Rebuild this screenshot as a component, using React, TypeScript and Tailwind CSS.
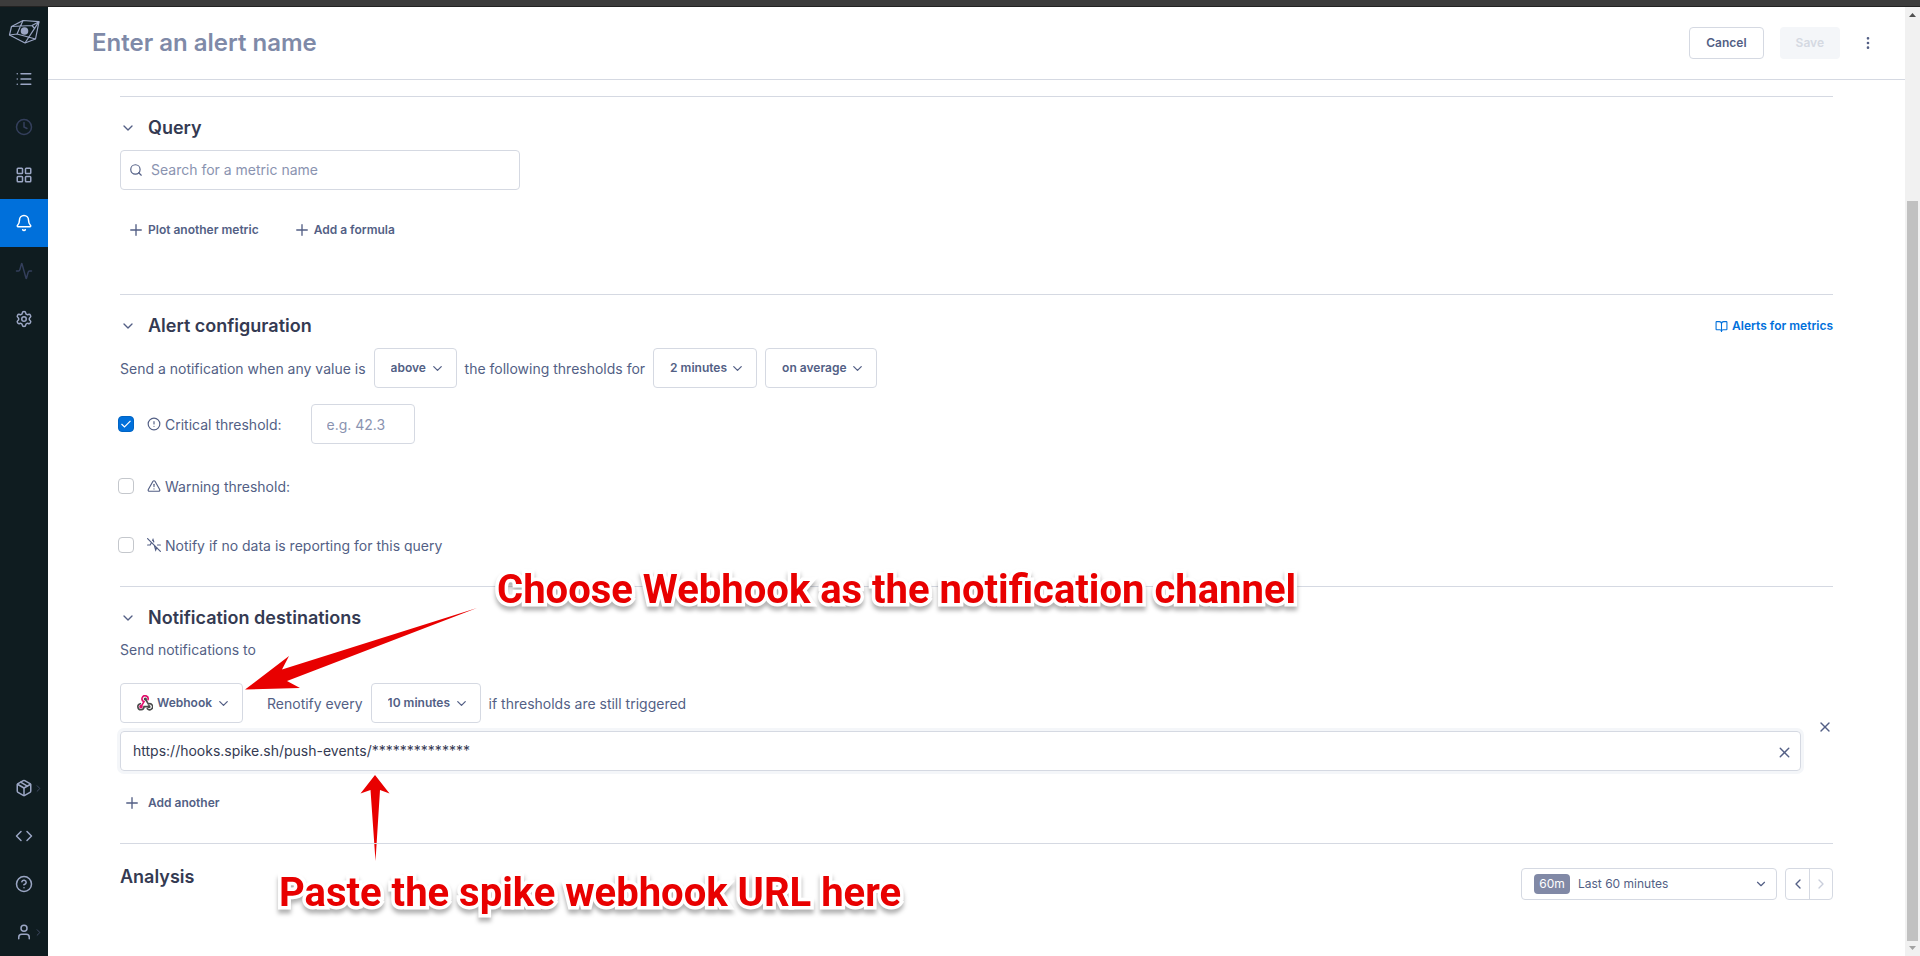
import type { ReactNode } from "react";
import {
  Activity,
  AlertTriangle,
  Bell,
  BookOpen,
  ChevronDown,
  ChevronLeft,
  ChevronRight,
  CircleAlert,
  CircleHelp,
  Clock,
  Code,
  LayoutGrid,
  List,
  MoreVertical,
  Package,
  Plus,
  Search,
  Settings,
  User,
  X,
} from "lucide-react";

function Logo() {
  return (
    <svg viewBox="0 0 32 26" className="h-[26px] w-8" fill="none" stroke="currentColor" strokeWidth="1.2" strokeLinejoin="round">
      <path d="M1.500 17 3.500 8.500 15 2.500 31 3.700 27.500 21 17 25 1.500 17Z" />
      <path d="M3.500 8.500 24 7.500 31 3.700M24 7.500 27 11M31 3.700 17 25M15 2.500 9 16 27.500 21M1.500 17 9 16" />
      <circle cx="16.500" cy="13" r="3.800" fill="currentColor" stroke="none" />
    </svg>
  );
}

function WebhookIcon() {
  return (
    <svg viewBox="0 0 24 24" className="size-4" fill="none" strokeWidth="2.4" strokeLinecap="round">
      <path stroke="#e0106c" d="M6 17.500 10.500 10A4.600 4.600 0 1 1 16.500 7" />
      <path stroke="#4a4a4a" d="M12.500 6 17 13.500A4.500 4.500 0 1 1 15.500 20.500" />
      <path stroke="#4a4a4a" d="M18 17.500H10.500A4.600 4.600 0 1 1 5 13" />
      <circle cx="6" cy="17.500" r="1.500" fill="#e0106c" stroke="#e0106c" />
      <circle cx="12.500" cy="6" r="1.200" fill="#4a4a4a" stroke="#4a4a4a" />
      <circle cx="18" cy="17.500" r="1.200" fill="#4a4a4a" stroke="#4a4a4a" />
    </svg>
  );
}

function NoDataIcon() {
  return (
    <svg viewBox="0 0 14 14" className="size-3.5" fill="none" stroke="currentColor" strokeWidth="1.200" strokeLinecap="round">
      <path d="M.6.6 13.400 13.400M.6 7H3.200L4.200 5M5.600 2.500 6 1.600 6.800 4M7.400 7.500 8.700 12 9.800 9.500M10.500 7H13.400" />
    </svg>
  );
}

type NavItem = { label: string; icon: ReactNode; tone?: "dim" | "active"; more?: boolean };

const topNav: NavItem[] = [
  { label: "Explorer", icon: <List size={18} /> },
  { label: "History", icon: <Clock size={18} />, tone: "dim" },
  { label: "Dashboards", icon: <LayoutGrid size={18} /> },
  { label: "Alerts", icon: <Bell size={18} />, tone: "active" },
  { label: "Service health", icon: <Activity size={18} />, tone: "dim" },
  { label: "Settings", icon: <Settings size={18} /> },
];

const bottomNav: NavItem[] = [
  { label: "Resources", icon: <Package size={18} />, more: true },
  { label: "Developer", icon: <Code size={18} /> },
  { label: "Help", icon: <CircleHelp size={18} /> },
  { label: "Account", icon: <User size={18} />, more: true },
];

function NavLink({ item }: { item: NavItem }) {
  const tone =
    item.tone === "active"
      ? "bg-[#0070db] text-white"
      : item.tone === "dim"
        ? "text-[#343f5c]"
        : "text-[#9ba6c4]";
  return (
    <a href="#" aria-label={item.label} className={`relative flex h-12 items-center justify-center ${tone}`}>
      {item.icon}
      {item.more && <ChevronRight size={11} className="absolute right-1 text-[#434d68]" />}
    </a>
  );
}

function Dropdown({ label, value, options, icon }: { label: string; value: string; options?: string[]; icon?: ReactNode }) {
  return (
    <div className="relative flex items-center text-[#535f85]">
      {icon && <span className="pointer-events-none absolute left-[17px]">{icon}</span>}
      <select
        aria-label={label}
        defaultValue={value}
        className={`h-10 appearance-none rounded border border-[#d5d9e2] bg-white pr-[29px] text-xs font-semibold ${icon ? "pl-9" : "pl-4"}`}
      >
        {(options ?? [value]).map((o) => (
          <option key={o}>{o}</option>
        ))}
      </select>
      <ChevronDown size={15} className="pointer-events-none absolute right-3" />
    </div>
  );
}

function SectionTitle({ children }: { children: ReactNode }) {
  return (
    <div className="flex h-7 items-center">
      <button aria-label="Collapse section" className="flex w-7 items-center text-[#535f85]">
        <ChevronDown size={16} />
      </button>
      <h2 className="text-lg font-semibold text-[#343a52]">{children}</h2>
    </div>
  );
}

function GhostButton({ children, wide }: { children: ReactNode; wide?: boolean }) {
  return (
    <button className={`flex h-8 items-center px-[7px] text-xs font-semibold text-[#535f85] ${wide ? "gap-[7px]" : "gap-[3px]"}`}>
      <Plus size={18} strokeWidth={1.8} />
      {children}
    </button>
  );
}

function CheckRow({ id, icon, text, checked, children }: { id: string; icon: ReactNode; text: string; checked?: boolean; children?: ReactNode }) {
  return (
    <div className="-ml-0.5 flex h-10 items-center">
      <span className="relative flex size-4">
        <input
          id={id}
          type="checkbox"
          defaultChecked={checked}
          className="peer size-4 appearance-none rounded border border-[#c4c7cc] bg-white checked:border-[#0064c4] checked:bg-[#0070db]"
        />
        <svg viewBox="0 0 16 16" className="pointer-events-none absolute inset-0 hidden size-4 peer-checked:block" fill="none" stroke="#fff" strokeWidth="1.2">
          <path d="M3.500 8 6.500 11 12.500 4.800" />
        </svg>
      </span>
      <label htmlFor={id} className="ml-[13px] flex items-center gap-1">
        {icon}
        <span className="pt-0.5">{text}</span>
      </label>
      {children}
    </div>
  );
}

const callout =
  "pointer-events-none absolute whitespace-nowrap font-[Roboto,sans-serif] text-[40px] leading-none font-bold text-[#e80000] [paint-order:stroke_fill] [-webkit-text-stroke:7px_white] drop-shadow-[0_4px_2px_rgba(0,0,0,0.3)]";

export default function App() {
  return (
    <div className="flex min-h-screen flex-col bg-white font-[Inter,sans-serif] text-sm text-[#535f85]">
      <div className="h-[7px] border-b border-[#222] bg-[#3c3c3c]" />
      <div className="flex grow">
        <nav className="flex w-12 shrink-0 flex-col bg-[#0f1c20]">
          <a href="#" aria-label="Home" className="flex h-12 items-center justify-center text-[#9ba6c4]">
            <Logo />
          </a>
          {topNav.map((item) => (
            <NavLink key={item.label} item={item} />
          ))}
          <div className="grow" />
          {bottomNav.map((item) => (
            <NavLink key={item.label} item={item} />
          ))}
        </nav>

        <div className="flex min-w-0 grow flex-col">
          <header className="flex h-[73px] items-center border-b border-[#d5d9e2] pr-[25px] pl-11">
            <input
              aria-label="Alert name"
              placeholder="Enter an alert name"
              className="min-w-0 grow text-2xl font-semibold outline-none placeholder:text-[#7f8aa8]"
            />
            <button className="h-8 rounded border border-[#d5d9e2] px-4 text-xs font-semibold">Cancel</button>
            <button disabled className="ml-4 h-8 rounded bg-[#f4f6f9] px-4 text-xs font-semibold text-[#d5d9e2]">
              Save
            </button>
            <button aria-label="More actions" className="ml-4 flex size-6 items-center justify-center">
              <MoreVertical size={16} />
            </button>
          </header>

          <main className="flex flex-col px-[72px] pt-4">
            <section className="flex h-[198px] flex-col border-t border-[#d5d9e2] pt-[17px]">
              <SectionTitle>Query</SectionTitle>
              <div className="relative mt-2 flex w-[400px] items-center">
                <Search size={14} className="absolute left-[9px]" />
                <input
                  aria-label="Metric name"
                  placeholder="Search for a metric name"
                  className="h-10 w-full rounded border border-[#d5d9e2] pr-3 pb-0.5 pl-[30px] placeholder:text-[#8a93b0]"
                />
              </div>
              <div className="mt-6 flex gap-5">
                <GhostButton>Plot another metric</GhostButton>
                <GhostButton>Add a formula</GhostButton>
              </div>
            </section>

            <section className="flex h-[292px] flex-col border-t border-[#d5d9e2] pt-[17px]">
              <div className="flex items-center justify-between">
                <SectionTitle>Alert configuration</SectionTitle>
                <a href="#" className="flex items-center gap-1 text-xs font-semibold text-[#0070db]">
                  <BookOpen size={13} />
                  Alerts for metrics
                </a>
              </div>
              <div className="mt-2 flex items-center gap-2">
                <span className="pt-0.5">Send a notification when any value is</span>
                <Dropdown label="Comparison" value="above" />
                <span className="pt-0.5">the following thresholds for</span>
                <Dropdown label="Duration" value="2 minutes" />
                <Dropdown label="Aggregation" value="on average" />
              </div>
              <div className="mt-4 flex flex-col">
                <CheckRow id="critical" icon={<CircleAlert size={14} />} text="Critical threshold:" checked>
                  <input
                    aria-label="Critical threshold value"
                    placeholder="e.g. 42.3"
                    className="ml-[29px] h-10 w-[104px] rounded border border-[#d5d9e2] px-[15px] placeholder:text-[#8a93b0]"
                  />
                </CheckRow>
                <div className="mt-[22px]">
                  <CheckRow id="warning" icon={<AlertTriangle size={14} />} text="Warning threshold:" />
                </div>
                <div className="mt-[19px]">
                  <CheckRow id="nodata" icon={<NoDataIcon />} text="Notify if no data is reporting for this query" />
                </div>
              </div>
            </section>

            <section className="relative flex h-[257px] flex-col border-t border-[#d5d9e2] pt-[17px]">
              <SectionTitle>Notification destinations</SectionTitle>
              <p className="mt-2">Send notifications to</p>
              <div className="mt-[23px] flex items-center">
                <div className="flex min-w-0 grow flex-col gap-2">
                  <div className="flex items-center gap-2">
                    <Dropdown label="Channel" value="Webhook" icon={<WebhookIcon />} />
                    <span className="ml-4 pt-0.5">Renotify every</span>
                    <Dropdown label="Renotify interval" value="10 minutes" />
                    <span className="pt-0.5">if thresholds are still triggered</span>
                  </div>
                  <div className="relative flex items-center">
                    <input
                      aria-label="Webhook URL"
                      defaultValue="https://hooks.spike.sh/push-events/**************"
                      className="h-10 w-full rounded border border-[#d5d9e2] pr-10 pb-0.5 pl-3 text-[#343a52] ring-3 ring-[#f4f6f9]"
                    />
                    <button aria-label="Clear URL" className="absolute right-2 flex pt-0.5">
                      <X size={17} />
                    </button>
                  </div>
                </div>
                <button aria-label="Remove destination" className="ml-4 flex">
                  <X size={16} />
                </button>
              </div>
              <div className="mt-4 -ml-1 flex">
                <GhostButton wide>Add another</GhostButton>
              </div>

              <p className={`${callout} top-[-17px] left-[377px]`}>Choose Webhook as the notification channel</p>
              <svg viewBox="0 0 234 84" className="pointer-events-none absolute top-5 left-[124px] h-[84px] w-[234px]" fill="#e80000">
                <path d="M233 1 38 62.500 45 49 1 82.500 56 81 43 74Z" />
              </svg>
              <svg viewBox="0 0 30 86" className="pointer-events-none absolute top-[188px] left-[240px] h-[86px] w-[30px]" fill="#e80000">
                <path d="M15 0 29.500 18.500 20 15 15.500 86 10.500 15 .5 18.500Z" />
              </svg>
            </section>

            <section className="relative flex items-start justify-between border-t border-[#d5d9e2] pt-6 pb-14">
              <h2 className="-mt-1 text-lg leading-[26px] font-semibold text-[#343a52]">Analysis</h2>
              <div className="flex gap-2">
                <button className="flex h-8 w-64 items-center rounded border border-[#d5d9e2] pr-2 pl-3 text-xs">
                  <span className="flex h-5 w-9 items-center justify-center rounded bg-[#8189a6] text-xs text-white">60m</span>
                  <span className="ml-2 grow text-left">Last 60 minutes</span>
                  <ChevronDown size={14} />
                </button>
                <div className="flex h-8 rounded border border-[#d5d9e2]">
                  <button aria-label="Earlier" className="flex w-6 items-center justify-center border-r border-[#d5d9e2]">
                    <ChevronLeft size={16} />
                  </button>
                  <button aria-label="Later" disabled className="flex w-[22px] items-center justify-center text-[#c9cedb]">
                    <ChevronRight size={16} />
                  </button>
                </div>
              </div>
              <p className={`${callout} top-[29px] left-[159px]`}>Paste the spike webhook URL here</p>
            </section>
          </main>
        </div>

        <div className="flex w-[15px] shrink-0 flex-col items-center bg-[#f1f1f1]">
          <svg viewBox="0 0 15 15" className="size-[15px]" fill="#505050">
            <path d="M7.500 6 11 10H4Z" />
          </svg>
          <div className="mt-[179px] w-[11px] grow bg-[#c1c1c1]" />
          <svg viewBox="0 0 15 15" className="size-[15px]" fill="#a3a3a3">
            <path d="M7.500 9 11 5H4Z" />
          </svg>
        </div>
      </div>
    </div>
  );
}
